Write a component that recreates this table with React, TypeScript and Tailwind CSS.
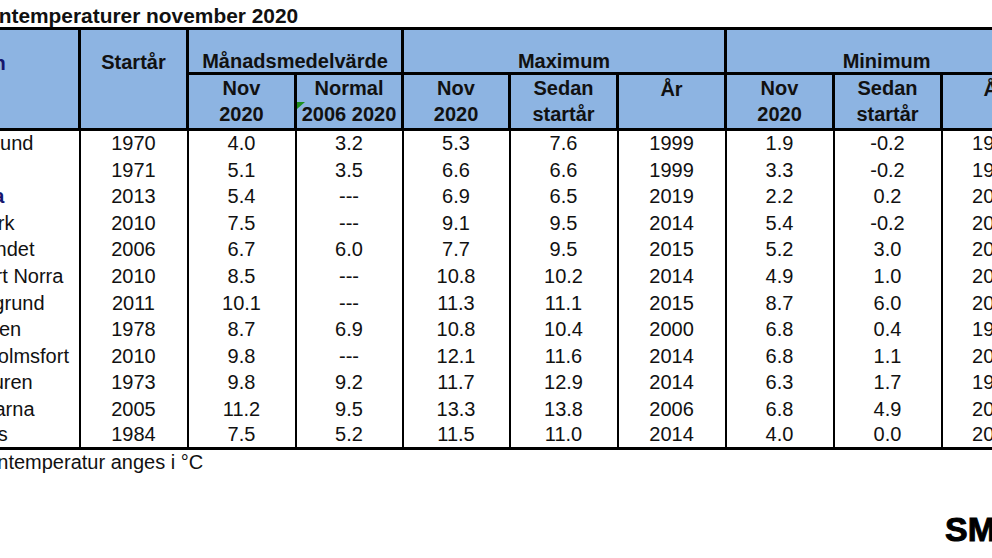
import React from "react";

type Row = {
  name: string;
  strong?: boolean;
  start: string;
  mean: string;
  normal: string;
  maxNov: string;
  maxSince: string;
  maxYear: string;
  minNov: string;
  minSince: string;
  minYear: string;
};

const rows: Row[] = [
  { name: "Furuögrund", start: "1970", mean: "4.0", normal: "3.2", maxNov: "5.3", maxSince: "7.6", maxYear: "1999", minNov: "1.9", minSince: "-0.2", minYear: "1993" },
  { name: "Ratan", start: "1971", mean: "5.1", normal: "3.5", maxNov: "6.6", maxSince: "6.6", maxYear: "1999", minNov: "3.3", minSince: "-0.2", minYear: "1993" },
  { name: "Bothnia", strong: true, start: "2013", mean: "5.4", normal: "---", maxNov: "6.9", maxSince: "6.5", maxYear: "2019", minNov: "2.2", minSince: "0.2", minYear: "2016" },
  { name: "Forsmark", start: "2010", mean: "7.5", normal: "---", maxNov: "9.1", maxSince: "9.5", maxYear: "2014", minNov: "5.4", minSince: "-0.2", minYear: "2016" },
  { name: "Askösundet", start: "2006", mean: "6.7", normal: "6.0", maxNov: "7.7", maxSince: "9.5", maxYear: "2015", minNov: "5.2", minSince: "3.0", minYear: "2010" },
  { name: "Landsort Norra", start: "2010", mean: "8.5", normal: "---", maxNov: "10.8", maxSince: "10.2", maxYear: "2014", minNov: "4.9", minSince: "1.0", minYear: "2010" },
  { name: "Ölandsgrund", start: "2011", mean: "10.1", normal: "---", maxNov: "11.3", maxSince: "11.1", maxYear: "2015", minNov: "8.7", minSince: "6.0", minYear: "2016" },
  { name: "Kullaviken", start: "1978", mean: "8.7", normal: "6.9", maxNov: "10.8", maxSince: "10.4", maxYear: "2000", minNov: "6.8", minSince: "0.4", minYear: "1993" },
  { name: "Kungsholmsfort", start: "2010", mean: "9.8", normal: "---", maxNov: "12.1", maxSince: "11.6", maxYear: "2014", minNov: "6.8", minSince: "1.1", minYear: "2010" },
  { name: "Trubaduren", start: "1973", mean: "9.8", normal: "9.2", maxNov: "11.7", maxSince: "12.9", maxYear: "2014", minNov: "6.3", minSince: "1.7", minYear: "1985" },
  { name: "Väderöarna", start: "2005", mean: "11.2", normal: "9.5", maxNov: "13.3", maxSince: "13.8", maxYear: "2006", minNov: "6.8", minSince: "4.9", minYear: "2010" },
  { name: "Ringhals", start: "1984", mean: "7.5", normal: "5.2", maxNov: "11.5", maxSince: "11.0", maxYear: "2014", minNov: "4.0", minSince: "0.0", minYear: "2010" },
];

const head = "bg-[#8db4e2] border-[3px] border-black font-bold align-bottom text-center leading-[22px]";
const sub = "bg-[#8db4e2] border-[3px] border-black font-bold align-bottom text-center leading-[26px] pb-[1px]";
const cell = "border-x-2 border-black align-bottom text-center leading-[22px] pb-[2px]";

export default function App() {
  return (
    <div className="w-[992px] h-[558px] overflow-hidden bg-white text-[#111] font-['Liberation_Sans',Arial,sans-serif]">
      <div className="-ml-[74px] w-[1130px]">
        <div className="pl-[3px] pt-[4px] text-[20.9px] leading-[23px] font-bold whitespace-nowrap">
          Ytvattentemperaturer november 2020
        </div>
        <table className="table-fixed border-collapse w-[1120px] text-[20px] border-[3px] border-black">
          <colgroup>
            <col className="w-[152px]" />
            <col className="w-[108px]" />
            <col className="w-[108px]" />
            <col className="w-[107px]" />
            <col className="w-[107px]" />
            <col className="w-[108px]" />
            <col className="w-[108px]" />
            <col className="w-[108px]" />
            <col className="w-[108px]" />
            <col className="w-[106px]" />
          </colgroup>
          <thead>
            <tr className="h-[45px]">
              <th className={`${head} border-b-0 text-left pl-[9px] text-[#16166e]`}>Station</th>
              <th className={`${head} border-b-0 pb-[1px]`}>Startår</th>
              <th colSpan={2} className={head}>Månadsmedelvärde</th>
              <th colSpan={3} className={head}>Maximum</th>
              <th colSpan={3} className={head}>Minimum</th>
            </tr>
            <tr className="h-[53px]">
              <th className={`${sub} border-t-0`}></th>
              <th className={`${sub} border-t-0`}></th>
              <th className={sub}>Nov<br />2020</th>
              <th className={`${sub} relative`}>
                <span className="absolute left-0 top-[27px] w-0 h-0 border-t-[7px] border-t-[#1e8f1e] border-r-[8px] border-r-transparent" />
                Normal<br />2006 2020
              </th>
              <th className={sub}>Nov<br />2020</th>
              <th className={sub}>Sedan<br />startår</th>
              <th className={`${sub} align-top pt-[1px]`}>År</th>
              <th className={sub}>Nov<br />2020</th>
              <th className={sub}>Sedan<br />startår</th>
              <th className={`${sub} align-top pt-[1px]`}>År</th>
            </tr>
          </thead>
          <tbody>
            {rows.map((r) => (
              <tr key={r.name} className="h-[26.6px]">
                <td
                  className={`${cell} text-left pl-[1px] whitespace-nowrap ${
                    r.strong ? "font-bold text-[#16166e]" : ""
                  }`}
                >
                  {r.name}
                </td>
                <td className={cell}>{r.start}</td>
                <td className={cell}>{r.mean}</td>
                <td className={cell}>{r.normal}</td>
                <td className={cell}>{r.maxNov}</td>
                <td className={cell}>{r.maxSince}</td>
                <td className={cell}>{r.maxYear}</td>
                <td className={cell}>{r.minNov}</td>
                <td className={cell}>{r.minSince}</td>
                <td className={cell}>{r.minYear}</td>
              </tr>
            ))}
          </tbody>
        </table>
        <div className="pl-[9px] pt-[1px] text-[20px] leading-[23px]">Ytvattentemperatur anges i °C</div>
      </div>
      <div className="ml-[945px] mt-[38px] whitespace-nowrap text-[34px] leading-none font-bold text-black [-webkit-text-stroke:1px_black]">
        SMHI
      </div>
    </div>
  );
}
